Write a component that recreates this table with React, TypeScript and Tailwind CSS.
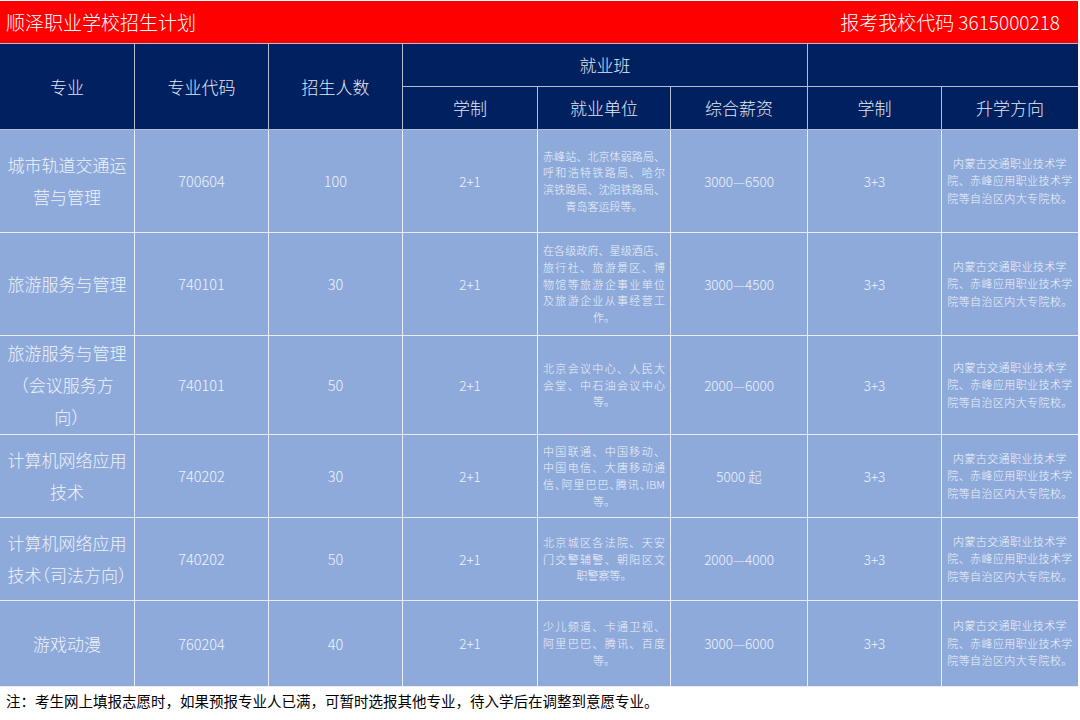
import React from "react";

type Row = {
  name: string[];
  halt?: boolean;
  code: string;
  n: string;
  units: string[];
  pay: string;
};

const rows: Row[] = [
  {
    name: ["城市轨道交通运", "营与管理"],
    code: "700604",
    n: "100",
    units: ["赤峰站、北京体弱路局、", "呼和浩特铁路局、哈尔", "滨铁路局、沈阳铁路局、", "青岛客运段等。"],
    pay: "3000—6500",
  },
  {
    name: ["旅游服务与管理"],
    code: "740101",
    n: "30",
    units: ["在各级政府、星级酒店、", "旅行社、旅游景区、博", "物馆等旅游企事业单位", "及旅游企业从事经营工", "作。"],
    pay: "3000—4500",
  },
  {
    name: ["旅游服务与管理", "（会议服务方", "向）"],
    halt: true,
    code: "740101",
    n: "50",
    units: ["北京会议中心、人民大", "会堂、中石油会议中心", "等。"],
    pay: "2000—6000",
  },
  {
    name: ["计算机网络应用", "技术"],
    code: "740202",
    n: "30",
    units: ["中国联通、中国移动、", "中国电信、大唐移动通", "信、阿里巴巴、腾讯、IBM", "等。"],
    pay: "5000 起",
  },
  {
    name: ["计算机网络应用", "技术（司法方向）"],
    halt: true,
    code: "740202",
    n: "50",
    units: ["北京城区各法院、天安", "门交警辅警、朝阳区文", "职警察等。"],
    pay: "2000—4000",
  },
  {
    name: ["游戏动漫"],
    code: "760204",
    n: "40",
    units: ["少儿频道、卡通卫视、", "阿里巴巴、腾讯、百度", "等。"],
    pay: "3000—6000",
  },
];

const up = ["内蒙古交通职业技术学", "院、赤峰应用职业技术学", "院等自治区内大专院校。"];

const cols = "grid-cols-[134px_133px_133px_134px_132px_136px_133px_136px]";

function H({ children, className = "" }: { children?: React.ReactNode; className?: string }) {
  return (
    <div className={"bg-[#002060] flex items-center justify-center text-[17px] text-[#e3e8f2] font-light " + className}>
      {children}
    </div>
  );
}

function B({ children, className = "" }: { children?: React.ReactNode; className?: string }) {
  return (
    <div className={"bg-[#8eaadb] flex items-center justify-center text-[#eef2f9] font-light " + className}>
      {children}
    </div>
  );
}

export default function App() {
  return (
    <div className="w-[1080px] h-[720px] bg-white font-['Noto_Sans_CJK_SC',sans-serif] overflow-hidden">
      <div className="w-[1078px] pt-px">
        <div className="h-[42px] bg-[#ff0000] flex items-center justify-between pl-[6px] pr-[18px] text-white text-[19px] font-light">
          <span>顺泽职业学校招生计划</span>
          <span>报考我校代码 3615000218</span>
        </div>
        <div className={"grid " + cols + " grid-rows-[42px_42px] gap-px bg-[#b3bdd3] py-px"}>
          <H className="row-span-2">专业</H>
          <H className="row-span-2">专业代码</H>
          <H className="row-span-2">招生人数</H>
          <H className="col-span-3">就业班</H>
          <H className="col-span-2"></H>
          <H>学制</H>
          <H>就业单位</H>
          <H>综合薪资</H>
          <H>学制</H>
          <H>升学方向</H>
        </div>
        <div className={"grid " + cols + " grid-rows-[102px_102px_98px_82px_82px_85px] gap-px bg-[#e8edf7] pb-px"}>
          {rows.map((r, i) => (
            <React.Fragment key={i}>
              <B className="flex-col text-[17px] leading-[32px]">
                {r.name.map((l, j) => (
                  <div key={j} className={"whitespace-nowrap " + (r.halt ? "[font-feature-settings:'halt']" : "")}>
                    {l}
                  </div>
                ))}
              </B>
              <B className="text-[14.5px]">{r.code}</B>
              <B className="text-[14.5px]">{r.n}</B>
              <B className="text-[13.5px]">2+1</B>
              <B className="flex-col text-[11px] leading-[16.7px]">
                {r.units.map((l, j) => {
                  const last = j === r.units.length - 1;
                  const tight = l.includes("IBM");
                  return (
                    <div
                      key={j}
                      className={
                        "w-[122px] whitespace-nowrap " +
                        (tight ? "[font-feature-settings:'halt'] " : "") +
                        (last ? "text-center" : "text-justify [text-align-last:justify]")
                      }
                    >
                      {l}
                    </div>
                  );
                })}
              </B>
              <B className="text-[13.5px]">{r.pay}</B>
              <B className="text-[13.5px]">3+3</B>
              <B className="flex-col text-[11px] leading-[17.5px] tracking-[0.4px]">
                {up.map((l, j) => (
                  <div key={j} className="whitespace-nowrap">
                    {l}
                  </div>
                ))}
              </B>
            </React.Fragment>
          ))}
        </div>
      </div>
      <div className="pl-[6px] pt-[4px] text-[14.5px] leading-[20px] text-black">
        注：考生网上填报志愿时，如果预报专业人已满，可暂时选报其他专业，待入学后在调整到意愿专业。
      </div>
    </div>
  );
}
